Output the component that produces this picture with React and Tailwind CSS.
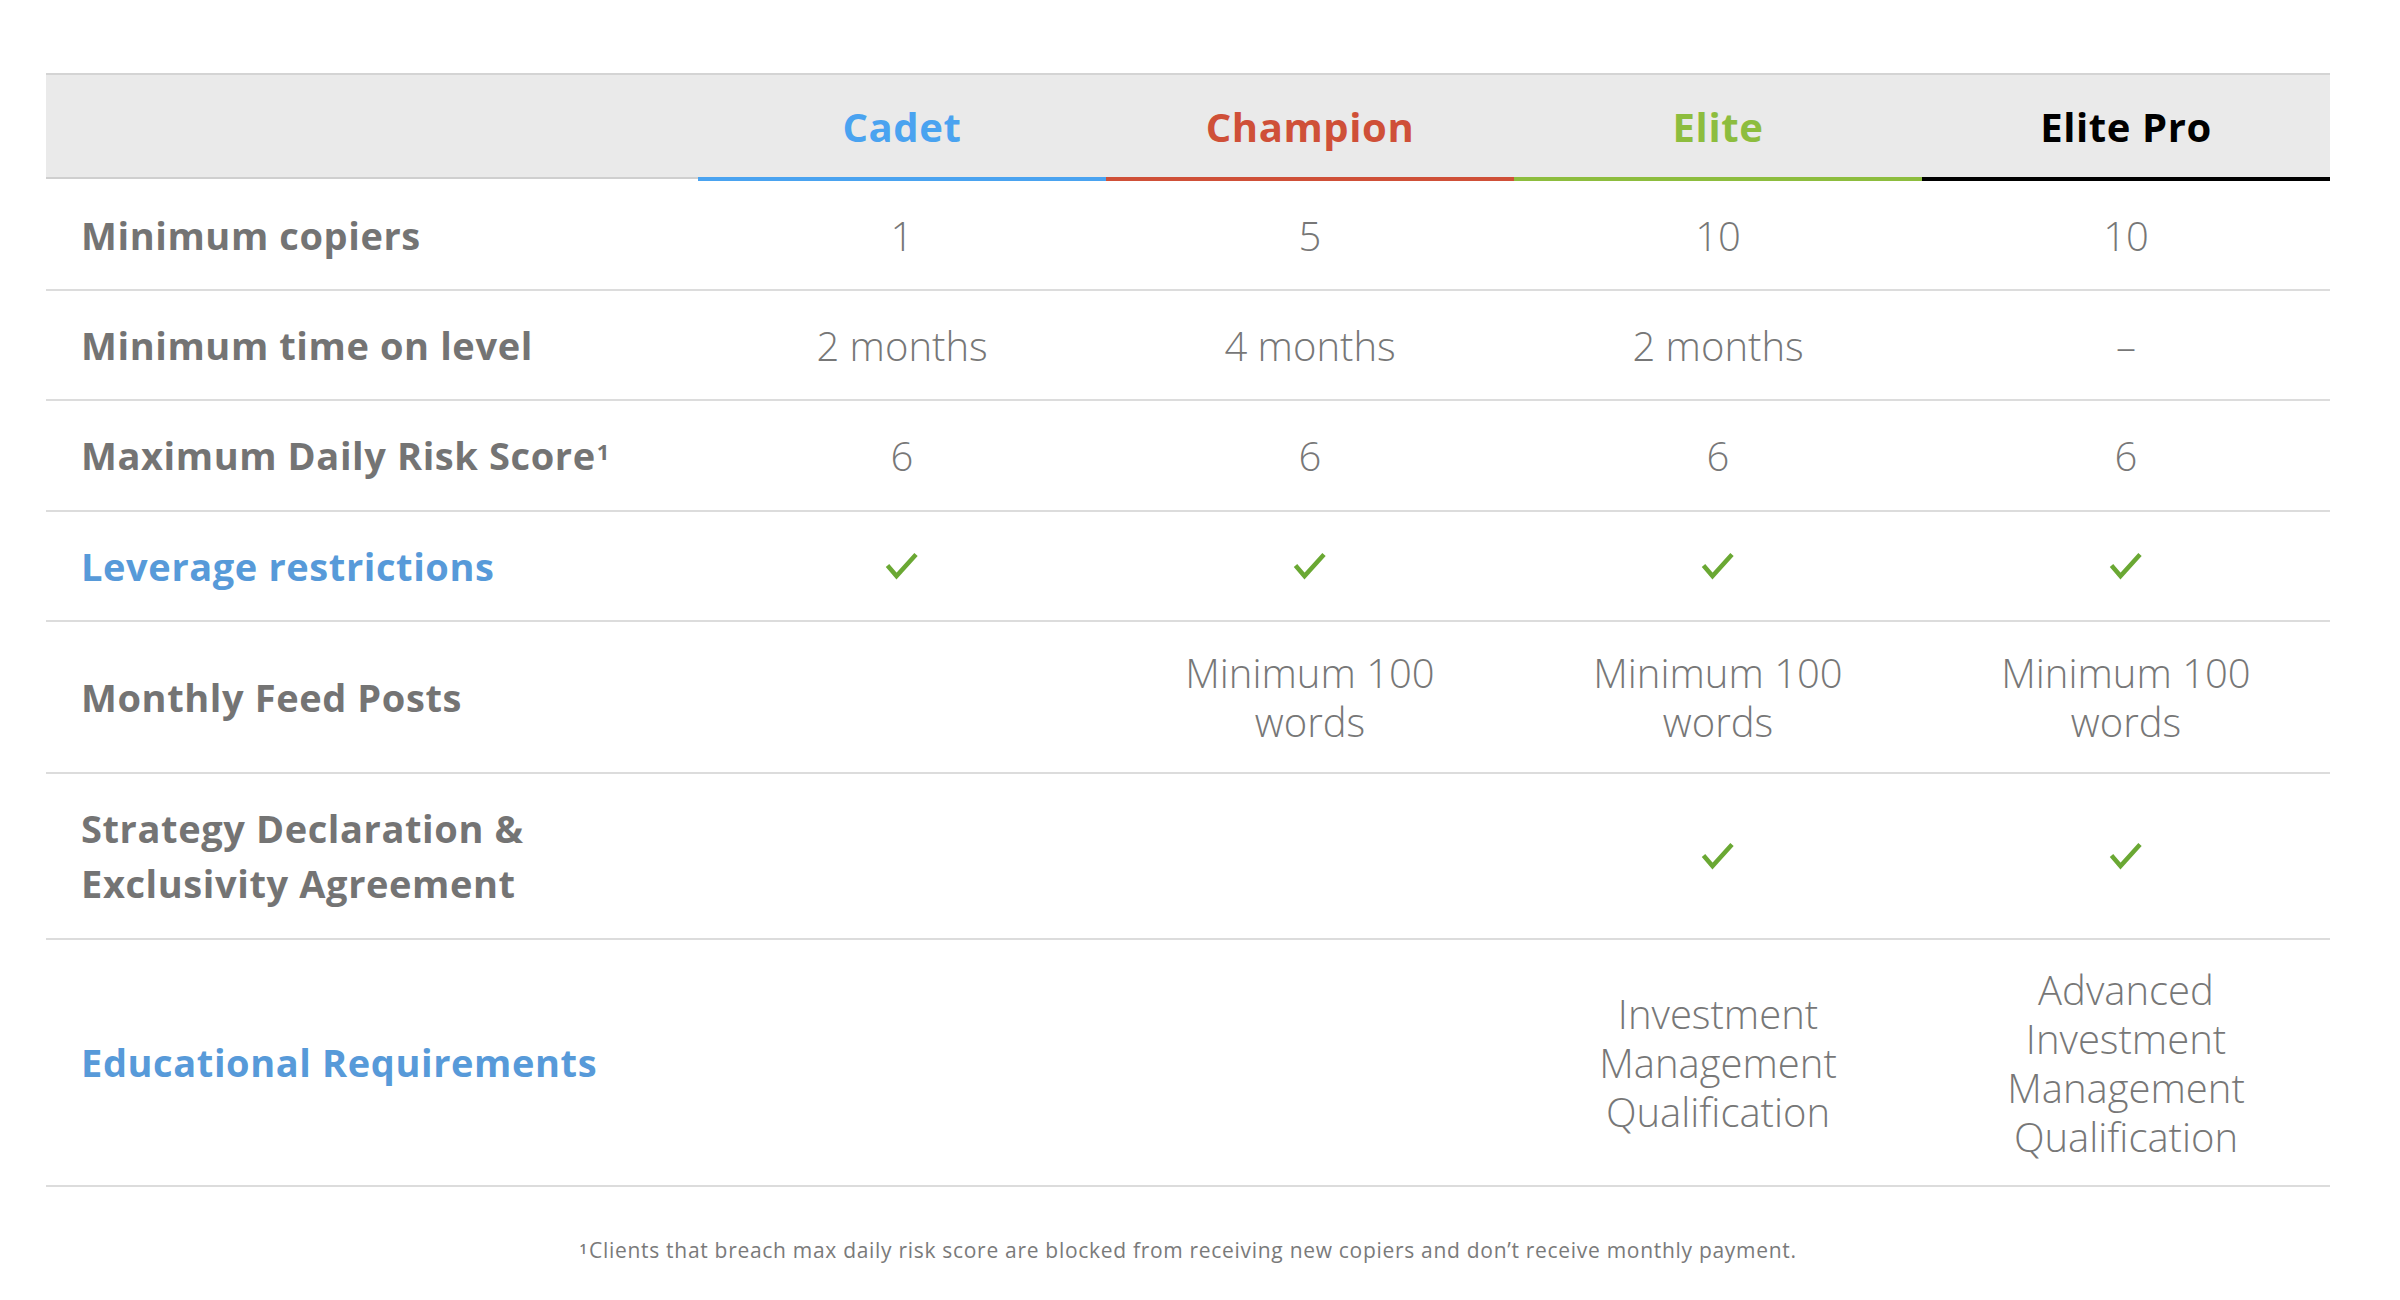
const TIERS = [
  { name: 'Cadet', text: 'text-[#4aa3f0]', line: 'border-[#4aa3f0]' },
  { name: 'Champion', text: 'text-[#cf5038]', line: 'border-[#cf5038]' },
  { name: 'Elite', text: 'text-[#8dbd3e]', line: 'border-[#8dbd3e]' },
  { name: 'Elite Pro', text: 'text-black', line: 'border-black' },
];

const CHECK = 'check';

const ROWS = [
  { label: 'Minimum copiers', h: 'h-[110px]', values: ['1', '5', '10', '10'] },
  { label: 'Minimum time on level', h: 'h-[110px]', values: ['2 months', '4 months', '2 months', '–'] },
  { label: 'Maximum Daily Risk Score', sup: '1', h: 'h-[111px]', values: ['6', '6', '6', '6'] },
  { label: 'Leverage restrictions', blue: true, h: 'h-[110px]', values: [CHECK, CHECK, CHECK, CHECK] },
  {
    label: 'Monthly Feed Posts',
    h: 'h-[152px]',
    values: ['', 'Minimum 100 words', 'Minimum 100 words', 'Minimum 100 words'],
  },
  {
    label: 'Strategy Declaration & Exclusivity Agreement',
    h: 'h-[166px]',
    values: ['', '', CHECK, CHECK],
  },
  {
    label: 'Educational Requirements',
    blue: true,
    h: 'h-[247px]',
    values: ['', '', 'Investment Management Qualification', 'Advanced Investment Management Qualification'],
  },
];

function Check() {
  return (
    <svg width="34" height="28" viewBox="0 0 34 28" fill="none">
      <path d="M2.5 13.5 L11.5 24 L31 2.5" stroke="#6aa833" strokeWidth="4.5" strokeLinejoin="miter" />
    </svg>
  );
}

export default function App() {
  return (
    <div className="min-h-screen bg-white pt-[73px] pl-[46px]" style={{ fontFamily: "'Open Sans', Lato, sans-serif" }}>
      <div className="w-[2284px]">
        {/* header */}
        <div className="flex items-start border-t-2 border-[#d4d4d4]">
          <div className="w-[652px] h-[104px] bg-[#eaeaea] border-b-2 border-[#cfcfcf]" />
          {TIERS.map((t) => (
            <div
              key={t.name}
              className={`w-[408px] h-[106px] pt-[2px] bg-[#eaeaea] border-b-4 ${t.line} flex items-center justify-center text-[40px] font-bold tracking-[0.6px] ${t.text}`}
            >
              {t.name}
            </div>
          ))}
        </div>

        {ROWS.map((r) => (
          <div key={r.label} className={`flex ${r.h} border-b-2 border-[#dcdcdc]`}>
            <div
              className={`w-[652px] pl-[35px] pr-[20px] flex items-center text-[38px] leading-[55px] font-bold tracking-[0.6px] ${
                r.blue ? 'text-[#579ad9]' : 'text-[#747474]'
              }`}
            >
              <span className="max-w-[560px]">
                {r.label}
                {r.sup && <sup className="text-[22px] ml-[1px] relative -top-[10px]">{r.sup}</sup>}
              </span>
            </div>
            {r.values.map((v, i) => (
              <div
                key={i}
                className="w-[408px] px-[52px] flex items-center justify-center text-center text-[40px] leading-[49px] font-light text-[#777777]"
              >
                {v === CHECK ? <Check /> : v}
              </div>
            ))}
          </div>
        ))}

        <div className="mt-[48px] text-center text-[21px] text-[#7a7a7a] tracking-[0.7px]">
          <sup className="text-[14px] font-semibold relative -top-[4px] mr-[1px]">1</sup>Clients that breach max daily risk score are blocked from receiving new copiers and don’t receive monthly payment.
        </div>
      </div>
    </div>
  );
}
